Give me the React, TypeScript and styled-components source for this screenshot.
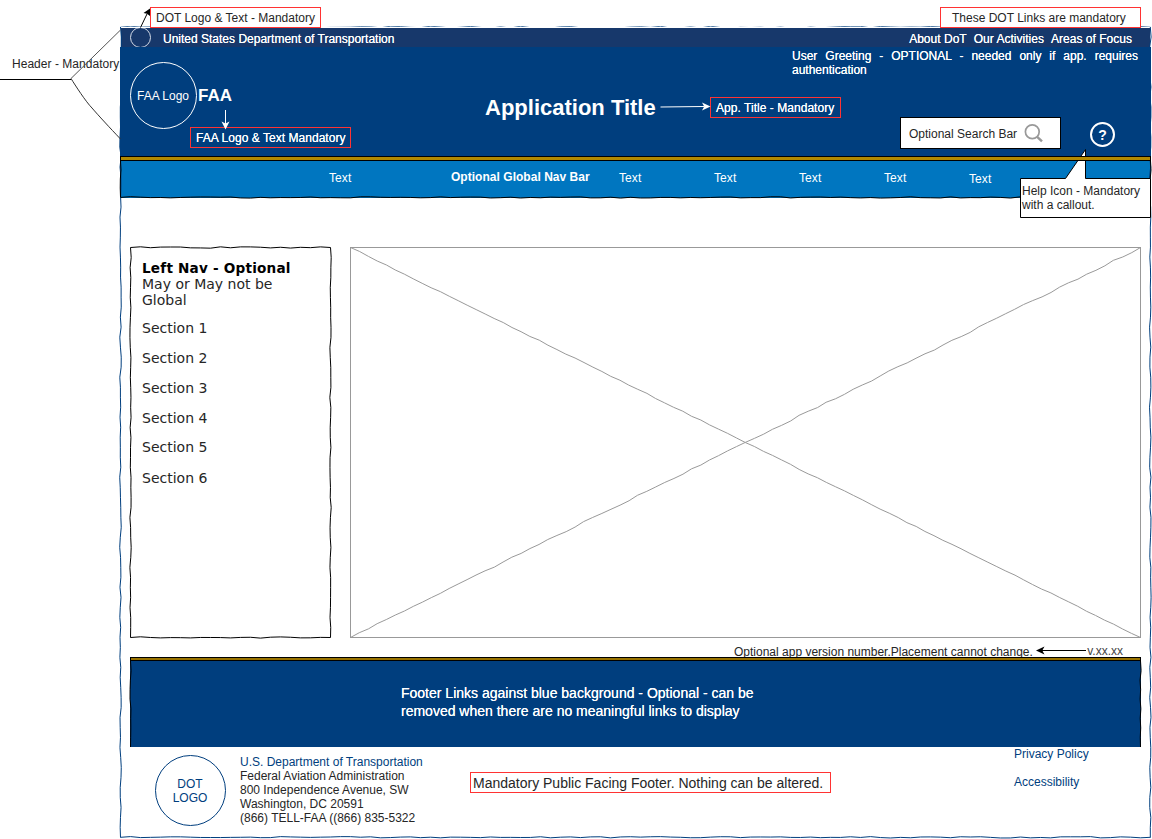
import React from "react";
import styled, { createGlobalStyle, css } from "styled-components";

const navy = "#003e7e";
const darkNavy = "#17386b";
const azure = "#0076c0";
const red = "#ff3333";
const ink = "#262626";

const GlobalStyle = createGlobalStyle`
  body {
    margin: 0;
    background: #fff;
    overflow: hidden;
    font-family: "Liberation Sans", Arial, sans-serif;
    font-size: 12px;
    line-height: 14px;
    color: ${ink};
  }
  * { box-sizing: border-box; }
`;

/* ---------- hand-drawn strokes ---------- */

function makeRandom(seed: number) {
  let s = seed;
  return () => {
    s = (s * 16807) % 2147483647;
    return s / 2147483647;
  };
}

function sketchLine(
  x1: number, y1: number, x2: number, y2: number,
  seed: number, wobble = 1.1, step = 10,
) {
  const random = makeRandom(seed);
  const length = Math.hypot(x2 - x1, y2 - y1);
  const count = Math.max(2, Math.round(length / step));
  const nx = -(y2 - y1) / length;
  const ny = (x2 - x1) / length;
  let d = `M${x1} ${y1}`;
  for (let i = 1; i < count; i++) {
    const t = i / count;
    const off = (random() - 0.5) * 2 * wobble;
    d += ` L${(x1 + (x2 - x1) * t + nx * off).toFixed(2)} ${(y1 + (y2 - y1) * t + ny * off).toFixed(2)}`;
  }
  return `${d} L${x2} ${y2}`;
}

const Ink = styled.svg<{ $z?: number }>`
  position: absolute;
  top: 0;
  left: 0;
  width: 1152px;
  height: 839px;
  pointer-events: none;
  z-index: ${(p) => p.$z ?? 0};
  fill: none;
`;

/* ---------- page ---------- */

const Canvas = styled.div`
  position: relative;
  width: 1152px;
  height: 839px;
  overflow: hidden;
  background: #fff;
`;

const Frame = styled.div`
  display: flex;
  flex-direction: column;
  width: 1031px;
  height: 839px;
  margin-left: 120px;
  padding-top: 28px;
`;

const UtilityBar = styled.div`
  display: flex;
  align-items: center;
  flex: none;
  height: 19px;
  margin: 0 1px;
  padding: 3px 18px 0 9px;
  background: ${darkNavy};
  color: #fff;
`;

const Seal = styled.div`
  width: 21px;
  height: 19px;
  margin-top: -3px;
  overflow: hidden;
  svg { display: block; }
`;

const Agency = styled.span`
  flex: 1;
  padding-left: 12px;
  text-shadow: 0 0 0.5px #fff;
`;

const UtilityLinks = styled.nav`
  display: flex;
  gap: 7px;
  letter-spacing: 0.02px;
  text-shadow: 0 0 0.5px #fff;
`;

const Header = styled.header`
  display: grid;
  grid-template-columns: 365px 307px 359px;
  flex: none;
  height: 109px;
  background: ${navy};
  color: #fff;
`;

const Brand = styled.div`
  display: flex;
  align-items: center;
  height: 67px;
  margin: 15px 0 0 10px;
`;

const Circle = styled.div<{ $size: number; $color: string }>`
  display: flex;
  align-items: center;
  justify-content: center;
  flex: none;
  width: ${(p) => p.$size}px;
  height: ${(p) => p.$size}px;
  padding-right: 1px;
  border: 1px solid ${(p) => p.$color};
  border-radius: 50%;
  color: ${(p) => p.$color};
  text-align: center;
  white-space: nowrap;
`;

const BrandName = styled.strong`
  padding-left: 1px;
  font-size: 17px;
  line-height: 20px;
`;

const Title = styled.h1`
  margin: 48px 0 0;
  font-size: 22px;
  line-height: 26px;
`;

const Greeting = styled.p`
  width: 346px;
  margin: 2px 0 40px;
  text-align: justify;
  text-shadow: 0 0 0.5px #fff;
`;

const Tools = styled.div`
  display: flex;
  align-items: flex-start;
  padding-left: 108px;
`;

const Search = styled.div`
  display: flex;
  align-items: center;
  width: 161px;
  height: 32px;
  border: 1px solid #000;
  background: #fff;
  color: ${ink};
  svg { margin-top: 2px; }
`;

const SearchLabel = styled.span`
  width: 123px;
  padding: 1px 0 0 8px;
  white-space: nowrap;
`;

const Help = styled.div`
  display: flex;
  align-items: center;
  justify-content: center;
  width: 25px;
  height: 25px;
  margin: 5px 0 0 29px;
  border: 2px solid #fff;
  border-radius: 50%;
  font-size: 14px;
  font-weight: bold;
`;

const Stripe = styled.div<{ $height: number; $gold: string }>`
  position: relative;
  z-index: 3;
  flex: none;
  height: ${(p) => p.$height}px;
  border: 1px solid #000;
  background: ${(p) => p.$gold};
`;

const GlobalNav = styled.nav`
  display: grid;
  grid-template-columns: 122px 168px 95px 85px 85px 85px 1fr;
  flex: none;
  height: 37px;
  padding: 10px 0 0 209px;
  background: ${azure};
  color: #fff;
`;

const NavItem = styled.span<{ $strong?: boolean; $drop?: number }>`
  padding-top: ${(p) => p.$drop ?? 0}px;
  letter-spacing: 0.1px;
  white-space: nowrap;
  ${(p) => p.$strong && css`
    margin-top: -1px;
    font-weight: bold;
    letter-spacing: 0.03px;
  `}
`;

const Body = styled.main`
  display: flex;
  gap: 19px;
  flex: none;
  height: 391px;
  margin: 49px 10px 0;
`;

const LeftNav = styled.aside`
  width: 201px;
  padding: 13px 12px;
  font-family: "DejaVu Sans", Verdana, sans-serif;
  font-size: 14px;
  line-height: 16px;
`;

const LeftNavIntro = styled.div`
  margin-bottom: 12px;
  strong {
    display: block;
    white-space: nowrap;
    font-size: 13.6px;
    letter-spacing: 0.2px;
    color: #000;
  }
`;

const Section = styled.div<{ $gap: number }>`
  margin-bottom: ${(p) => p.$gap}px;
`;

const Placeholder = styled.section`
  width: 791px;
  border: 1px solid #999;
`;

const VersionRow = styled.div`
  display: flex;
  justify-content: space-between;
  flex: none;
  height: 19px;
  padding: 7px 28px 0 614px;
  white-space: nowrap;
`;

const VersionTag = styled.span`
  margin-top: -1px;
  color: #444;
`;

const Footer = styled.footer`
  flex: none;
  margin: 0 10px;
`;

const FooterLinks = styled.div`
  height: 86px;
  padding: 23px 0 0 271px;
  background: ${navy};
  color: #fff;
  font-size: 14px;
  line-height: 18px;
  text-shadow: 0 0 0.5px #fff;
`;

const FooterText = styled.p`
  width: 370px;
  margin: 0;
`;

const FooterInfo = styled.div`
  display: flex;
  align-items: flex-start;
  padding: 8px 0 0 25px;
`;

const Address = styled.address`
  flex: 1;
  padding-left: 14px;
  font-style: normal;
`;

const BlueText = styled.div`
  color: ${navy};
`;

const FooterAside = styled.div`
  display: flex;
  flex-direction: column;
  gap: 14px;
  width: 127px;
  margin-top: -8px;
  color: ${navy};
`;

/* ---------- annotations laid over the wireframe ---------- */

const Note = styled.div<{
  $x: number; $y: number; $w: number; $light?: boolean; $pad?: number; $size?: number; $track?: number;
}>`
  position: absolute;
  z-index: 4;
  left: ${(p) => p.$x}px;
  top: ${(p) => p.$y}px;
  width: ${(p) => p.$w}px;
  height: 21px;
  padding-left: ${(p) => p.$pad ?? 5}px;
  border: 1px solid ${red};
  background: ${(p) => (p.$light ? "transparent" : "#fff")};
  color: ${(p) => (p.$light ? "#fff" : ink)};
  font-size: ${(p) => p.$size ?? 12}px;
  line-height: 20px;
  letter-spacing: ${(p) => p.$track ?? 0}px;
  text-shadow: ${(p) => (p.$light ? "0 0 0.5px #fff" : "none")};
  white-space: nowrap;
`;

const HeaderNote = styled.div`
  position: absolute;
  left: 12px;
  top: 57px;
  letter-spacing: 0.03px;
  white-space: nowrap;
`;

const CalloutText = styled.div`
  position: absolute;
  z-index: 4;
  left: 1022px;
  top: 184px;
  width: 126px;
`;

const sections = [
  { label: "Section 1", gap: 14 },
  { label: "Section 2", gap: 14 },
  { label: "Section 3", gap: 14 },
  { label: "Section 4", gap: 13 },
  { label: "Section 5", gap: 15 },
  { label: "Section 6", gap: 0 },
];

export default function App() {
  return (
    <Canvas>
      <GlobalStyle />

      <Ink>
        <clipPath id="above-bar">
          <rect x="120" y="26" width="1031" height="1" />
        </clipPath>
        <g stroke={navy}>
          <path
            d={sketchLine(120.5, 27.2, 1150.5, 27.2, 11, 1)}
            opacity={0.7}
            clipPath="url(#above-bar)"
          />
          <path d={sketchLine(120.5, 27, 120.5, 837.5, 23, 0.8)} />
          <path d={sketchLine(1150.3, 27, 1150.3, 837.5, 37, 0.8)} />
          <path d={sketchLine(120.5, 837.3, 1150.5, 837.3, 51, 0.7)} />
        </g>
      </Ink>

      <Frame>
        <UtilityBar>
          <Seal>
            <svg width="21" height="19" viewBox="0 0 21 19" fill="none">
              <circle cx="10.5" cy="9.5" r="10" stroke="#d5dce8" />
            </svg>
          </Seal>
          <Agency>United States Department of Transportation</Agency>
          <UtilityLinks>
            <span>About DoT</span>
            <span>Our Activities</span>
            <span>Areas of Focus</span>
          </UtilityLinks>
        </UtilityBar>

        <Header>
          <Brand>
            <Circle $size={67} $color="#fff">FAA Logo</Circle>
            <BrandName>FAA</BrandName>
          </Brand>
          <Title>Application Title</Title>
          <div>
            <Greeting>
              User Greeting - OPTIONAL - needed only if app. requires authentication
            </Greeting>
            <Tools>
              <Search>
                <SearchLabel>Optional Search Bar</SearchLabel>
                <svg width="20" height="20" viewBox="0 0 20 20" fill="none" stroke="#999">
                  <circle cx="8.3" cy="7.8" r="6.9" strokeWidth="1.7" />
                  <path d="M13.2 12.8L18 17.4" strokeWidth="2.4" />
                </svg>
              </Search>
              <Help>?</Help>
            </Tools>
          </div>
        </Header>

        <Stripe $height={5} $gold="#b08800" />

        <GlobalNav>
          <NavItem>Text</NavItem>
          <NavItem $strong>Optional Global Nav Bar</NavItem>
          <NavItem>Text</NavItem>
          <NavItem>Text</NavItem>
          <NavItem>Text</NavItem>
          <NavItem>Text</NavItem>
          <NavItem $drop={1}>Text</NavItem>
        </GlobalNav>

        <Body>
          <LeftNav>
            <LeftNavIntro>
              <strong>Left Nav - Optional</strong>
              May or May not be Global
            </LeftNavIntro>
            {sections.map((s) => (
              <Section key={s.label} $gap={s.gap}>{s.label}</Section>
            ))}
          </LeftNav>
          <Placeholder />
        </Body>

        <VersionRow>
          <span>Optional app version number.Placement cannot change.</span>
          <VersionTag>v.xx.xx</VersionTag>
        </VersionRow>

        <Footer>
          <Stripe $height={4} $gold="#997300" />
          <FooterLinks>
            <FooterText>
              Footer Links against blue background - Optional - can be removed when there are no
              meaningful links to display
            </FooterText>
          </FooterLinks>
          <FooterInfo>
            <Circle $size={71} $color={navy}>DOT<br />LOGO</Circle>
            <Address>
              <BlueText>U.S. Department of Transportation</BlueText>
              Federal Aviation Administration<br />
              800 Independence Avenue, SW<br />
              Washington, DC 20591<br />
              (866) TELL-FAA ((866) 835-5322
            </Address>
            <FooterAside>
              <span>Privacy Policy</span>
              <span>Accessibility</span>
            </FooterAside>
          </FooterInfo>
        </Footer>
      </Frame>

      <Ink $z={1}>
        {/* nav bar outline */}
        <g stroke="#000">
          <path d={sketchLine(120.5, 161, 120.5, 197, 5, 0.5)} />
          <path d={sketchLine(1150.5, 161, 1150.5, 197, 6, 0.5)} />
          <path d={sketchLine(120.5, 197.4, 1150.5, 197.4, 71, 0.7)} />
        </g>
        {/* left nav outline */}
        <g stroke="#000">
          <path d={sketchLine(130.5, 247.5, 330.5, 247.5, 81, 0.7)} />
          <path d={sketchLine(330.5, 247.5, 330.5, 637.5, 93, 0.7)} />
          <path d={sketchLine(130.5, 637.5, 330.5, 637.5, 95, 0.7)} />
          <path d={sketchLine(130.5, 247.5, 130.5, 637.5, 97, 0.7)} />
        </g>
        {/* placeholder diagonals */}
        <g stroke="#999">
          <path d={sketchLine(350.5, 247.5, 1140.5, 637.5, 103, 0.45)} />
          <path d={sketchLine(1140.5, 247.5, 350.5, 637.5, 107, 0.75)} />
        </g>
        {/* footer outline */}
        <g stroke="#000">
          <path d={sketchLine(130.5, 661, 130.5, 747, 111, 0.6)} />
          <path d={sketchLine(1140.5, 661, 1140.5, 747, 113, 0.6)} />
        </g>
        {/* header bracket */}
        <path d="M0 79.5H71" stroke="#000" />
        <path d="M71 78.5L120.5 30" stroke="#555" />
        <path d="M71 78.5C75 85 86 102 92 108C98 115 110 128 120.5 139" stroke="#333" />
      </Ink>

      <Ink $z={2}>
        {/* help callout */}
        <path
          d="M1020.5 178.5H1065.5L1085.5 149.5V178.5H1150.5V217.5H1020.5Z"
          fill="#fff"
          stroke="#000"
        />
      </Ink>
      <CalloutText>Help Icon - Mandatory with a callout.</CalloutText>

      <HeaderNote>Header - Mandatory</HeaderNote>
      <Note $x={150} $y={7} $w={171}>DOT Logo &amp; Text - Mandatory</Note>
      <Note $x={940} $y={7} $w={201} $pad={11}>These DOT Links are mandatory</Note>
      <Note $x={710} $y={97} $w={131} $light $track={0.04}>App. Title - Mandatory</Note>
      <Note $x={190} $y={127} $w={161} $light $track={0.04}>FAA Logo &amp; Text Mandatory</Note>
      <Note $x={470} $y={772} $w={361} $pad={2} $size={14}>
        Mandatory Public Facing Footer. Nothing can be altered.
      </Note>

      <Ink $z={5}>
        {/* annotation arrows */}
        <path d="M140.5 27.5L147 14" stroke="#000" />
        <path d="M150 8.5L143.5 13L147 13.8L150 16Z" fill="#000" />
        <path d="M225.5 110V124" stroke="#fff" />
        <path d="M225.5 129.5L221.5 121.5L225.5 123.5L229.5 121.5Z" fill="#fff" />
        <path d="M660.5 107L704 106.5" stroke="#fff" />
        <path d="M710.5 106.5L702 102.5L704.2 106.5L702 110.5Z" fill="#fff" />
        <path d="M1086 650.5H1042" stroke="#000" />
        <path d="M1036 650.5L1044.5 646.5L1042.3 650.5L1044.5 654.5Z" fill="#000" />
      </Ink>
    </Canvas>
  );
}
